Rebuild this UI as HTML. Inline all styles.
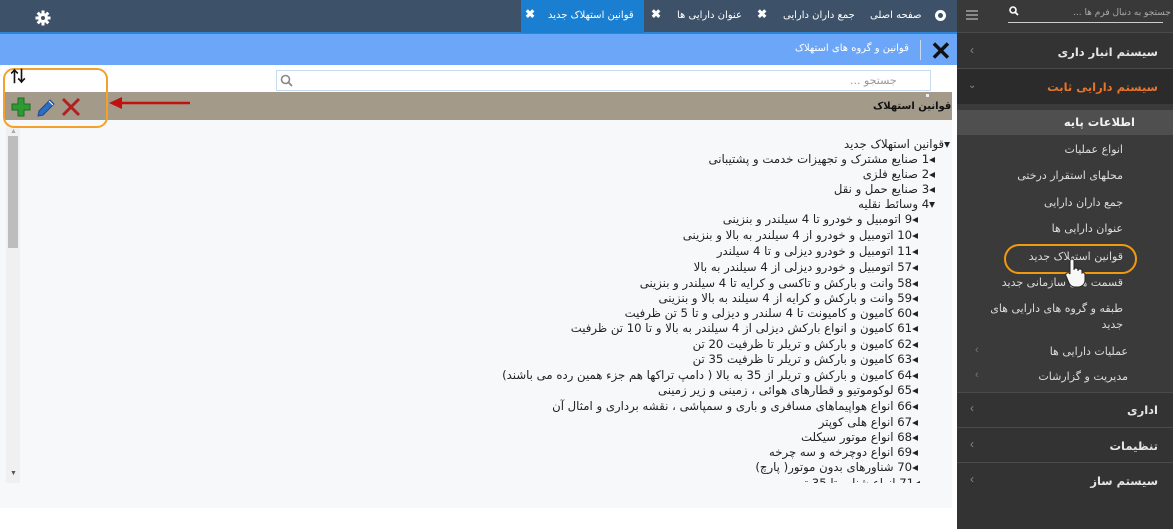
<!DOCTYPE html>
<html><head><meta charset="utf-8"><style>
*{margin:0;padding:0;box-sizing:border-box}
body{width:1173px;height:529px;overflow:hidden;background:#fff;font-family:"Liberation Sans","Noto Sans CJK SC",sans-serif;position:relative}
.a{position:absolute}
.t{position:absolute;white-space:nowrap;direction:rtl;font-family:"DejaVu Sans","Noto Sans CJK SC",sans-serif}
.tr{font-size:11.7px;color:#222;line-height:15px}
.sb{color:#e6e6e6;font-size:11.5px;font-weight:bold}
.sub{color:#ddd;font-size:11px}
</style></head><body>
<!-- top bar -->
<div class="a" style="left:0;top:0;width:957px;height:32px;background:#3d5168"></div>
<div class="a" style="left:0;top:32px;width:957px;height:2px;background:#2b85d8"></div>
<div class="a" style="left:0;top:34px;width:957px;height:31px;background:#6ca6f8"></div>
<svg class="a" style="left:35px;top:10px" width="16" height="16" viewBox="0 0 16 16"><g fill="#fff"><circle cx="8" cy="8" r="5"/><rect x="6.5" y="0.5" width="3" height="15"/><rect x="0.5" y="6.5" width="15" height="3"/><rect x="6.5" y="0.5" width="3" height="15" transform="rotate(45 8 8)"/><rect x="6.5" y="0.5" width="3" height="15" transform="rotate(-45 8 8)"/></g><circle cx="8" cy="8" r="2" fill="#3d5168"/></svg>
<div class="a" style="left:521px;top:0;width:123px;height:33px;background:#1a7fd0"></div>
<div class="t" style="left:548px;top:10px;font-size:10px;color:#fff">قوانین استهلاک جدید</div>
<div class="a" style="left:525px;top:7px;color:#fff;font-size:12px;font-weight:bold">✖</div>
<div class="a" style="left:651px;top:7px;color:#fff;font-size:12px;font-weight:bold">✖</div>
<div class="t" style="left:677px;top:10px;font-size:10px;color:#fff">عنوان دارایی ها</div>
<div class="a" style="left:757px;top:7px;color:#fff;font-size:12px;font-weight:bold">✖</div>
<div class="t" style="left:783px;top:10px;font-size:10px;color:#fff">جمع داران دارایی</div>
<div class="t" style="left:870px;top:10px;font-size:10px;color:#fff">صفحه اصلی</div>
<div class="a" style="left:935px;top:10px;width:11px;height:11px;border-radius:50%;background:#fff"></div>
<div class="a" style="left:938px;top:13px;width:5px;height:5px;border-radius:50%;background:#3d5168"></div>
<!-- header band -->
<div class="a" style="left:930px;top:38px;font-size:26px;line-height:26px;font-weight:bold;color:#111">✕</div>
<div class="a" style="left:920px;top:40px;width:1px;height:20px;background:#c9d9ef"></div>
<div class="t" style="left:795px;top:43px;font-size:10px;color:#fff">قوانین و گروه های استهلاک</div>
<!-- search -->
<div class="a" style="left:276px;top:70px;width:655px;height:21px;border:1px solid #c5dcef;background:#fff"></div>
<svg class="a" style="left:280px;top:74px" width="13" height="13"><circle cx="5.5" cy="5.5" r="4" stroke="#888" stroke-width="1.6" fill="none"/><line x1="8.5" y1="8.5" x2="12" y2="12" stroke="#888" stroke-width="1.8"/></svg>
<div class="t" style="left:850px;top:74px;font-size:11px;color:#999">جستجو ...</div>
<!-- tan bar -->
<div class="a" style="left:5px;top:92px;width:947px;height:28px;background:#a39a89"></div>
<div class="a" style="left:926px;top:94px;width:3px;height:3px;background:#eee"></div>
<div class="t" style="left:873px;top:101px;font-size:10px;font-weight:bold;color:#111">قوانین استهلاک</div>
<!-- tree area -->
<div class="a" style="left:0;top:120px;width:952px;height:388px;background:#f7f8fa"></div>
<div class="a" style="left:6px;top:125px;width:14px;height:358px;background:#f0f0f0"></div>
<div class="a" style="left:8px;top:136px;width:10px;height:112px;background:#bdbdbd"></div>
<div class="a" style="left:10px;top:128px;font-size:7px;color:#aaa">▲</div>
<div class="a" style="left:10px;top:470px;font-size:7px;color:#555">▼</div>
<!-- toolbar icons -->
<div class="a" style="left:3px;top:68px;width:105px;height:60px;border:2px solid #f5a02a;border-radius:11px"></div>
<div class="a" style="left:10px;top:69px;font-size:16px;font-weight:bold;color:#111;line-height:18px">⇅</div>
<svg class="a" style="left:10px;top:96px" width="22" height="22"><path d="M8 2h6v6h6v6h-6v6h-6v-6h-6v-6h6z" fill="#2e9a34" stroke="#1d6e22"/></svg>
<svg class="a" style="left:34px;top:96px" width="22" height="22"><path d="M4 20l1-5 11-11 4 4-11 11z" fill="#2e6dc4" stroke="#1a4a90"/><path d="M15 5l4 4" stroke="#fff" stroke-width="1"/></svg>
<svg class="a" style="left:60px;top:96px" width="22" height="22"><path d="M3 3L19 19M19 3L3 19" stroke="#b02020" stroke-width="3"/></svg>
<svg class="a" style="left:108px;top:96px" width="84" height="14"><path d="M12 7H82" stroke="#c01010" stroke-width="2.5"/><path d="M1 7l13-6v12z" fill="#c01010"/></svg>
<!-- tree -->
<div class="t tr" style="right:223px;top:137px">▾قوانین استهلاک جدید</div>
<div class="t tr" style="right:238px;top:152px">◂1 صنایع مشترک و تجهیزات خدمت و پشتیبانی</div>
<div class="t tr" style="right:238px;top:167px">◂2 صنایع فلزی</div>
<div class="t tr" style="right:238px;top:182px">◂3 صنایع حمل و نقل</div>
<div class="t tr" style="right:238px;top:197px">▾4 وسائط نقلیه</div>
<div class="t tr" style="right:255px;top:212px">◂9 اتومبیل و خودرو تا 4 سیلندر و بنزینی</div>
<div class="t tr" style="right:255px;top:228px">◂10 اتومبیل و خودرو از 4 سیلندر به بالا و بنزینی</div>
<div class="t tr" style="right:255px;top:244px">◂11 اتومبیل و خودرو دیزلی و تا 4 سیلندر</div>
<div class="t tr" style="right:255px;top:260px">◂57 اتومبیل و خودرو دیزلی از 4 سیلندر به بالا</div>
<div class="t tr" style="right:255px;top:276px">◂58 وانت و بارکش و تاکسی و کرایه تا 4 سیلندر و بنزینی</div>
<div class="t tr" style="right:255px;top:291px">◂59 وانت و بارکش و کرایه از 4 سیلند به بالا و بنزینی</div>
<div class="t tr" style="right:255px;top:306px">◂60 کامیون و کامیونت تا 4 سلندر و دیزلی و تا 5 تن ظرفیت</div>
<div class="t tr" style="right:255px;top:321px">◂61 کامیون و انواع بارکش دیزلی از 4 سیلندر به بالا و تا 10 تن ظرفیت</div>
<div class="t tr" style="right:255px;top:337px">◂62 کامیون و بارکش و تریلر تا ظرفیت 20 تن</div>
<div class="t tr" style="right:255px;top:352px">◂63 کامیون و بارکش و تریلر تا ظرفیت 35 تن</div>
<div class="t tr" style="right:255px;top:368px">◂64 کامیون و بارکش و تریلر از 35 به بالا ( دامپ تراکها هم جزء همین رده می باشند)</div>
<div class="t tr" style="right:255px;top:383px">◂65 لوکوموتیو و قطارهای هوائی ، زمینی و زیر زمینی</div>
<div class="t tr" style="right:255px;top:399px">◂66 انواع هواپیماهای مسافری و باری و سمپاشی ، نقشه برداری و امثال آن</div>
<div class="t tr" style="right:255px;top:415px">◂67 انواع هلی کوپتر</div>
<div class="t tr" style="right:255px;top:430px">◂68 انواع موتور سیکلت</div>
<div class="t tr" style="right:255px;top:445px">◂69 انواع دوچرخه و سه چرخه</div>
<div class="t tr" style="right:255px;top:460px">◂70 شناورهای بدون موتور( پارچ)</div>
<div class="a" style="left:700px;top:476px;width:220px;height:7px;overflow:hidden"><div class="t tr" style="right:0;top:0">◂71 انواع شناور تا 35 تن</div></div>
<!-- sidebar -->
<div class="a" style="left:957px;top:0;width:216px;height:529px;background:#333"></div>
<div class="a" style="left:957px;top:0;width:216px;height:33px;background:#393939;border-bottom:1px solid #4a4a4a"></div>
<div class="a" style="left:966px;top:10px;width:12px;height:10px;border-top:2px solid #888;border-bottom:2px solid #888"></div>
<div class="a" style="left:966px;top:14px;width:12px;height:2px;background:#888"></div>
<div class="a" style="left:1008px;top:22px;width:155px;height:1px;background:#ccc"></div>
<div class="t" style="left:1073px;top:8px;font-size:9px;color:#aaa">جستجو به دنبال فرم ها ...</div>
<svg class="a" style="left:1009px;top:6px" width="10" height="10"><circle cx="4" cy="4" r="3" stroke="#fff" stroke-width="1.6" fill="none"/><line x1="6" y1="6" x2="9" y2="9" stroke="#fff" stroke-width="1.8"/></svg>
<div class="t sb" style="right:15px;top:45px">سیستم انبار داری</div>
<div class="a" style="left:970px;top:43px;color:#888;font-size:12px">‹</div>
<div class="a" style="left:957px;top:68px;width:216px;height:1px;background:#4a4a4a"></div>
<div class="a" style="left:957px;top:69px;width:216px;height:35px;background:#2b2b2b"></div>
<div class="t" style="right:15px;top:80px;color:#e8742a;font-size:11.5px;font-weight:bold">سیستم دارایی ثابت</div>
<div class="a" style="left:968px;top:80px;color:#888;font-size:10px">⌄</div>
<div class="a" style="left:957px;top:104px;width:216px;height:288px;background:#3a3a3a"></div>
<div class="a" style="left:957px;top:110px;width:216px;height:25px;background:#4f4f4f"></div>
<div class="t sb" style="right:38px;top:115px;color:#f2f2f2">اطلاعات پایه</div>
<div class="t sub" style="right:50px;top:143px">انواع عملیات</div>
<div class="t sub" style="right:50px;top:169px">محلهای استقرار درختی</div>
<div class="t sub" style="right:50px;top:196px">جمع داران دارایی</div>
<div class="t sub" style="right:50px;top:222px">عنوان دارایی ها</div>
<div class="a" style="left:1004px;top:244px;width:133px;height:30px;border:2px solid #f09a10;border-radius:15px"></div>
<div class="t sub" style="right:50px;top:250px">قوانین استهلاک جدید</div>
<div class="t sub" style="right:50px;top:276px">قسمت های سازمانی جدید</div>
<svg class="a" style="left:1064px;top:258px" width="22" height="30"><path d="M6 14V3a2 2 0 0 1 4 0v9a2 2 0 0 1 4 0v1a2 2 0 0 1 4 0v2a2 2 0 0 1 3 1v6c0 4-3 7-7 7h-3c-3 0-5-2-6-4L2 18a2 2 0 0 1 4-2z" fill="#f8f8f8" stroke="#222" stroke-width="1"/></svg>
<div class="t sub" style="right:50px;top:302px">طبقه و گروه های دارایی های</div>
<div class="t sub" style="right:50px;top:318px">جدید</div>
<div class="t sub" style="right:45px;top:345px">عملیات دارایی ها</div>
<div class="t sub" style="right:45px;top:370px">مدیریت و گزارشات</div>
<div class="a" style="left:975px;top:344px;color:#777;font-size:11px">‹</div>
<div class="a" style="left:975px;top:369px;color:#777;font-size:11px">‹</div>
<div class="a" style="left:957px;top:392px;width:216px;height:1px;background:#4a4a4a"></div>
<div class="t sb" style="right:15px;top:403px">اداری</div>
<div class="a" style="left:970px;top:401px;color:#888;font-size:12px">‹</div>
<div class="a" style="left:957px;top:427px;width:216px;height:1px;background:#4a4a4a"></div>
<div class="t sb" style="right:15px;top:439px">تنظیمات</div>
<div class="a" style="left:970px;top:437px;color:#888;font-size:12px">‹</div>
<div class="a" style="left:957px;top:462px;width:216px;height:1px;background:#4a4a4a"></div>
<div class="t sb" style="right:15px;top:474px">سیستم ساز</div>
<div class="a" style="left:970px;top:472px;color:#888;font-size:12px">‹</div>
</body></html>
